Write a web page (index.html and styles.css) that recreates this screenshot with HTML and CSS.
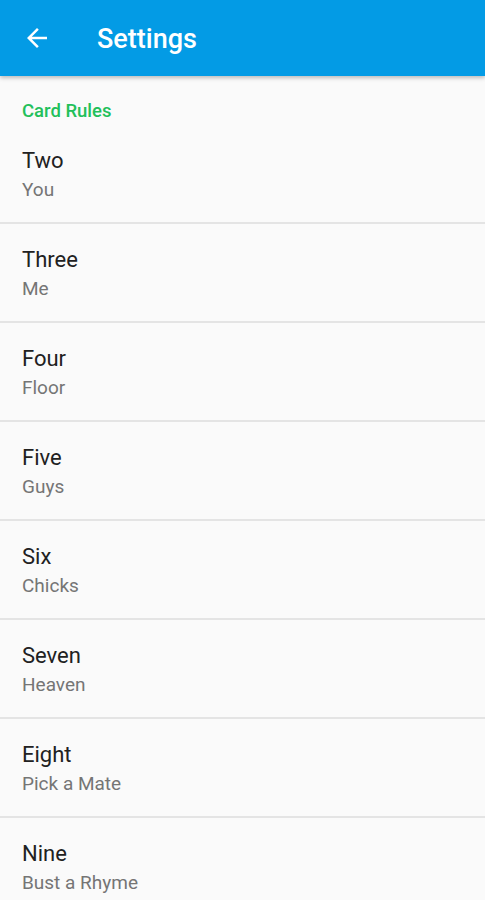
FILE: index.html
```html
<!doctype html>
<html>
<head>
<meta charset="utf-8">
<link rel="stylesheet" href="styles.css">
</head>
<body>
	<div class="toolbar">
		<svg class="back" width="24" height="24" viewBox="0 0 24 24"><path d="M20 11H7.83l5.59-5.59L12 4l-8 8 8 8 1.41-1.41L7.83 13H20v-2z" fill="#fff"/></svg>
		<h1 class="title">Settings</h1>
	</div>
	<div class="section">Card Rules</div>
	<ul class="list">
		<li><div class="name">Two</div><div class="desc">You</div></li>
		<li><div class="name">Three</div><div class="desc">Me</div></li>
		<li><div class="name">Four</div><div class="desc">Floor</div></li>
		<li><div class="name">Five</div><div class="desc">Guys</div></li>
		<li><div class="name">Six</div><div class="desc">Chicks</div></li>
		<li><div class="name">Seven</div><div class="desc">Heaven</div></li>
		<li><div class="name">Eight</div><div class="desc">Pick a Mate</div></li>
		<li><div class="name">Nine</div><div class="desc">Bust a Rhyme</div></li>
	</ul>
</body>
</html>
```
FILE: styles.css
```css
*{
	margin:0;
	padding:0;
}
body{
	background:#fafafa;
	font-family:Roboto, "Noto Sans", sans-serif;
	overflow:hidden;
}
.toolbar{
	height:76px;
	background:#039be5;
	display:flex;
	align-items:center;
	padding-left:22px;
	box-shadow:0 2px 4px rgba(0,0,0,.25);
	position:relative;
}
.back{
	width:30px;
	height:30px;
}
.title{
	color:#fff;
	font-size:27px;
	font-weight:500;
	margin-left:45px;
	margin-top:2px;
}
.section{
	color:#22c05a;
	font-size:18.5px;
	font-weight:500;
	padding:24px 22px 0;
	line-height:22px;
}
.list{
	list-style:none;
}
.list li{
	padding:22px 22px 20px;
	border-bottom:2px solid #e4e4e4;
}
.list li:first-child{
	padding-top:25px;
}
.name{
	font-size:22px;
	line-height:28px;
	margin-bottom:3px;
	color:#212121;
}
.desc{
	font-size:19px;
	line-height:24px;
	color:#757575;
}
```
